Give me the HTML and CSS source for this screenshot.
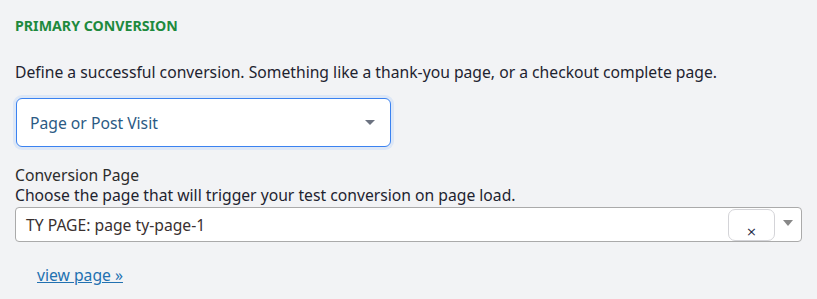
FILE: index.html
```html
<!DOCTYPE html>
<html>
<head>
<meta charset="utf-8">
<link rel="stylesheet" href="styles.css">
</head>
<body>
<div class="panel">
  <h3 class="heading">PRIMARY CONVERSION</h3>
  <p class="desc">Define a successful conversion. Something like a thank-you page, or a checkout complete page.</p>
  <div class="select-wrap">
    <div class="select">
      <span class="select-text">Page or Post Visit</span>
      <span class="caret"></span>
    </div>
  </div>
  <div class="field">
    <div class="label">Conversion Page</div>
    <div class="help">Choose the page that will trigger your test conversion on page load.</div>
    <div class="s2">
      <span class="s2-text">TY PAGE: page ty-page-1</span>
      <span class="s2-clear">×</span>
      <span class="s2-arrow"><span class="caret small"></span></span>
    </div>
  </div>
  <a class="view" href="#">view page »</a>
</div>
</body>
</html>
```
FILE: styles.css
```css
html, body {
  margin: 0;
  padding: 0;
  background: #f2f3f5;
}
body {
  font-family: "Noto Sans", "Open Sans", sans-serif;
  color: #1e2330;
  width: 817px;
  height: 299px;
  overflow: hidden;
}
.panel {
  padding: 16px 15px 0 15px;
}
.heading {
  margin: 0;
  font-size: 14.2px;
  font-weight: 700;
  color: #1e8a3e;
  line-height: 19px;
}
.desc {
  margin: 27px 0 0 0;
  font-size: 15.7px;
  line-height: 21px;
  color: #1e2330;
}
.select-wrap {
  margin-top: 13px;
  width: 380px;
  padding: 2px;
  margin-left: -2px;
}
.select {
  box-sizing: border-box;
  height: 49px;
  margin-left: 1px;
  width: 375px;
  background: #fff;
  border: 1px solid #3b82f0;
  border-radius: 6px;
  box-shadow: 0 0 0 3px #dde7f6;
  display: flex;
  align-items: center;
  justify-content: space-between;
  padding: 0 14px 0 13px;
}
.select-text {
  font-size: 15.7px;
  color: #2b5a84;
}
.caret {
  width: 0;
  height: 0;
  border-left: 5px solid transparent;
  border-right: 5px solid transparent;
  border-top: 5px solid #6b7280;
  margin-right: 1px;
}
.caret.small {
  border-left-width: 5px;
  border-right-width: 5px;
  border-top: 6px solid #888;
}
.field {
  margin-top: 16px;
}
.label {
  font-size: 15.7px;
  line-height: 20px;
  color: #2c2c2c;
}
.help {
  font-size: 15.7px;
  line-height: 21px;
  color: #1e2330;
}
.s2 {
  box-sizing: border-box;
  margin-top: 1px;
  width: 787px;
  height: 35px;
  background: #fff;
  border: 1px solid #aaa;
  border-radius: 4px;
  display: flex;
  align-items: center;
  padding-left: 10px;
}
.s2-text {
  flex: 1;
  font-size: 15.7px;
  color: #3a3030;
}
.s2-clear {
  box-sizing: border-box;
  width: 47px;
  height: 32px;
  border: 1px solid #d4d4d8;
  border-radius: 7px;
  display: flex;
  align-items: flex-end;
  justify-content: center;
  padding-bottom: 2px;
  font-size: 13px;
  line-height: 13px;
  color: #1f2b45;
  font-family: "DejaVu Sans", sans-serif;
}
.s2-arrow {
  width: 26px;
  display: flex;
  justify-content: center;
  align-items: center;
  margin-top: -4px;
}
.view {
  display: inline-block;
  margin: 22px 0 0 22px;
  font-size: 15.7px;
  color: #2271b1;
  text-decoration: underline;
}
```
